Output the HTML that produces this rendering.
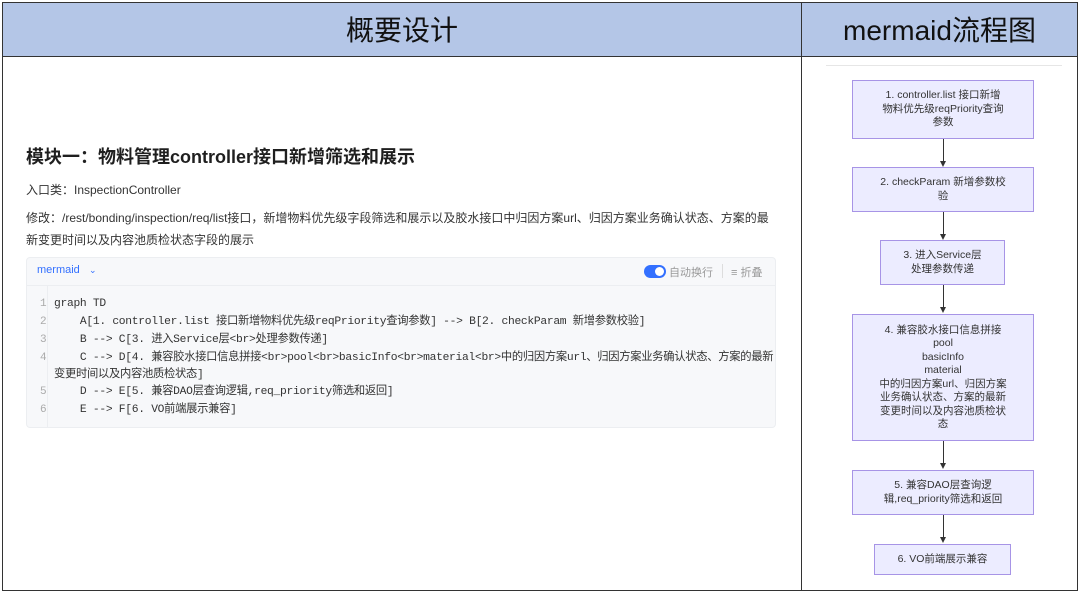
<!DOCTYPE html>
<html><head><meta charset="utf-8"><style>
*{margin:0;padding:0;box-sizing:border-box}
body{width:1080px;height:595px;background:#fff;font-family:"Liberation Sans","Noto Sans CJK SC",sans-serif;position:relative;overflow:hidden}
.frame{position:absolute;left:2px;top:2px;width:1076px;height:589px;border:1px solid #333}
.hdr{position:absolute;left:3px;top:3px;width:1074px;height:54px;background:#b4c6e7;border-bottom:1px solid #333}
.vline{position:absolute;left:801px;top:3px;width:1px;height:588px;background:#333}
.h1{position:absolute;top:14px;font-size:28px;line-height:34px;color:#111;text-align:center}
.t{position:absolute;left:26px;color:#333}
.code{position:absolute;left:26px;top:257px;width:750px;height:171px;background:#f7f8fa;border:1px solid #eceef1;border-radius:4px}
.cl{position:absolute;left:27px;font-family:"Liberation Mono","Noto Sans CJK SC",monospace;font-size:11.3px;line-height:14px;color:#333;white-space:pre;letter-spacing:-0.3px}
.ln{position:absolute;left:13px;font-family:"Liberation Mono",monospace;font-size:11px;line-height:14px;color:#aaa}
.box{position:absolute;background:#ececff;border:1px solid #a794e6;font-size:10.5px;color:#333;text-align:center;display:flex;align-items:center;justify-content:center;line-height:13.5px}
.ar{position:absolute;left:943px;width:1px;background:#333}
.ah{position:absolute;left:940px;width:0;height:0;border-left:3.5px solid transparent;border-right:3.5px solid transparent;border-top:6px solid #333}
</style></head><body>
<div class="hdr"></div>
<div class="frame"></div>
<div class="vline"></div>
<div class="h1" style="left:3px;width:798px">概要设计</div>
<div class="h1" style="left:802px;width:275px">mermaid流程图</div>
<div style="position:absolute;left:826px;top:65px;width:236px;height:1px;background:#e6e6e6"></div>

<div class="t" style="top:143px;font-size:18px;font-weight:bold;color:#1f1f1f">模块一：物料管理controller接口新增筛选和展示</div>
<div class="t" style="top:181px;font-size:12px">入口类：InspectionController</div>
<div class="t" style="top:207px;font-size:12px;line-height:22px;width:750px">修改：/rest/bonding/inspection/req/list接口，新增物料优先级字段筛选和展示以及胶水接口中归因方案url、归因方案业务确认状态、方案的最新变更时间以及内容池质检状态字段的展示</div>

<div class="code">
 <div style="position:absolute;left:0;top:0;width:100%;height:28px;border-bottom:1px solid #eceef1"></div>
 <div style="position:absolute;left:10px;top:6px;font-size:11px;color:#3370ff">mermaid &nbsp;&nbsp;<span style="font-size:9px">⌄</span></div>
 <div style="position:absolute;left:617px;top:7px;width:22px;height:13px;border-radius:7px;background:#3370ff"><div style="position:absolute;right:2px;top:2px;width:9px;height:9px;border-radius:50%;background:#fff"></div></div>
 <div style="position:absolute;left:642px;top:6px;font-size:11px;color:#999">自动换行</div>
 <div style="position:absolute;left:695px;top:6px;width:1px;height:14px;background:#ddd"></div>
 <div style="position:absolute;left:704px;top:6px;font-size:11px;color:#999">≡ 折叠</div>
 <div style="position:absolute;left:20px;top:28px;width:1px;height:142px;background:#eceef1"></div>
 <div class="ln" style="top:39px">1</div><div class="cl" style="top:39px">graph TD</div>
 <div class="ln" style="top:57px">2</div><div class="cl" style="top:57px">    A[1. controller.list 接口新增物料优先级reqPriority查询参数] --&gt; B[2. checkParam 新增参数校验]</div>
 <div class="ln" style="top:75px">3</div><div class="cl" style="top:75px">    B --&gt; C[3. 进入Service层&lt;br&gt;处理参数传递]</div>
 <div class="ln" style="top:93px">4</div><div class="cl" style="top:93px">    C --&gt; D[4. 兼容胶水接口信息拼接&lt;br&gt;pool&lt;br&gt;basicInfo&lt;br&gt;material&lt;br&gt;中的归因方案url、归因方案业务确认状态、方案的最新</div>
 <div class="cl" style="top:110px">变更时间以及内容池质检状态]</div>
 <div class="ln" style="top:127px">5</div><div class="cl" style="top:127px">    D --&gt; E[5. 兼容DAO层查询逻辑,req_priority筛选和返回]</div>
 <div class="ln" style="top:145px">6</div><div class="cl" style="top:145px">    E --&gt; F[6. VO前端展示兼容]</div>
</div>

<div class="box" style="left:852px;top:80px;width:182px;height:59px">1. controller.list 接口新增<br>物料优先级reqPriority查询<br>参数</div>
<div class="ar" style="top:139px;height:23px"></div><div class="ah" style="top:161px"></div>
<div class="box" style="left:852px;top:167px;width:182px;height:45px">2. checkParam 新增参数校<br>验</div>
<div class="ar" style="top:212px;height:23px"></div><div class="ah" style="top:234px"></div>
<div class="box" style="left:880px;top:240px;width:125px;height:45px">3. 进入Service层<br>处理参数传递</div>
<div class="ar" style="top:285px;height:23px"></div><div class="ah" style="top:307px"></div>
<div class="box" style="left:852px;top:314px;width:182px;height:127px">4. 兼容胶水接口信息拼接<br>pool<br>basicInfo<br>material<br>中的归因方案url、归因方案<br>业务确认状态、方案的最新<br>变更时间以及内容池质检状<br>态</div>
<div class="ar" style="top:441px;height:23px"></div><div class="ah" style="top:463px"></div>
<div class="box" style="left:852px;top:470px;width:182px;height:45px">5. 兼容DAO层查询逻<br>辑,req_priority筛选和返回</div>
<div class="ar" style="top:515px;height:23px"></div><div class="ah" style="top:537px"></div>
<div class="box" style="left:874px;top:544px;width:137px;height:31px">6. VO前端展示兼容</div>
</body></html>
